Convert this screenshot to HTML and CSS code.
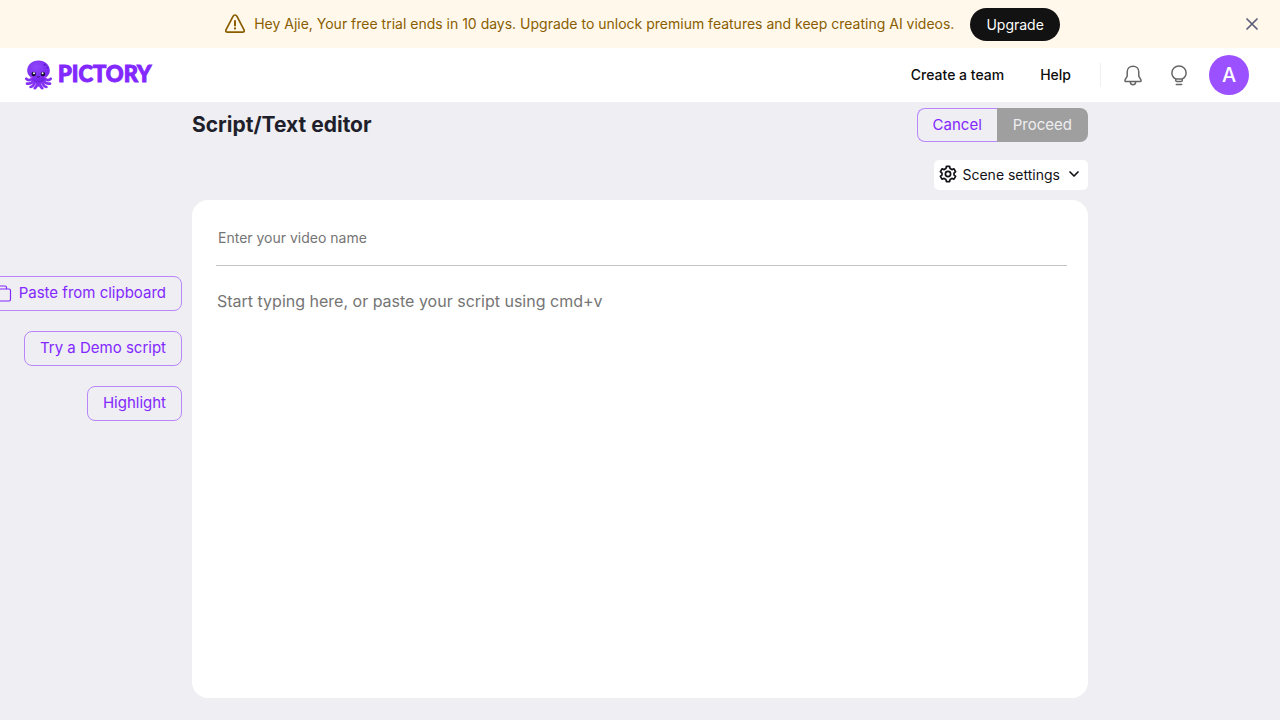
FILE: index.html
```html
<!DOCTYPE html>
<html lang="en">
<head>
<meta charset="utf-8">
<meta name="viewport" content="width=device-width, initial-scale=1">
<title>Pictory</title>
<link rel="stylesheet" href="styles.css">
</head>
<body>
<div class="banner">
  <div class="banner-content">
    <svg class="warning-icon" viewBox="0 0 24 24" width="24" height="24" fill="none" stroke="currentColor" stroke-width="1.7" stroke-linecap="round" stroke-linejoin="round" aria-hidden="true"><path d="M10 4.4 3.1 17.6C2.3 19.2 2.9 20.2 4.6 20.2H19.4C21.1 20.2 21.7 19.2 20.9 17.6L14 4.4C13 2.5 11 2.5 10 4.4Z"/><path d="M12 8.9v4.6" stroke-width="2"/><path d="M12 16.4v.2" stroke-width="2.2"/></svg>
    <span class="banner-text">Hey Ajie, Your free trial ends in 10 days. Upgrade to unlock premium features and keep creating AI videos.</span>
    <button class="upgrade" type="button">Upgrade</button>
  </div>
  <button class="close" type="button" aria-label="Close"><svg viewBox="0 0 12 12" width="12" height="12" stroke="currentColor" stroke-width="1.7" stroke-linecap="round" aria-hidden="true"><path d="M1 1 11 11M11 1 1 11"/></svg></button>
</div>

<header class="header">
  <a class="logo" href="#" aria-label="Pictory">
    <svg viewBox="0 0 30 30" width="30" height="30" aria-hidden="true">
      <defs><radialGradient id="skin" cx=".4" cy=".3" r=".8"><stop offset="0" stop-color="#8f48fb"/><stop offset=".7" stop-color="#7a2af0"/><stop offset="1" stop-color="#6520d2"/></radialGradient></defs>
      <g fill="none" stroke="#8331f3" stroke-width="2.7" stroke-linecap="round">
        <path d="M9 18C6.5 20.5 4 20.7 2.3 18.8"/><path d="M10 20C8 23.4 5.5 24 3 23.6"/><path d="M11.5 20C10.5 24.5 9 26.6 6.6 27"/><path d="M13 20.5C13.5 24.5 12.7 27 10.8 28.2"/>
        <path d="M20 18C22.5 20.5 25 20.7 26.7 18.8"/><path d="M19 20C21 23.4 23.5 24 26 23.6"/><path d="M17.5 20C18.5 24.5 20 26.6 22.4 27"/><path d="M16 20.5C15.5 24.5 16.3 27 18.2 28.2"/><path d="M14.5 21v4.5"/>
      </g>
      <path d="M14.5.5C7.8.5 3.2 5 3.2 10.8c0 3.1 1.9 5.5 4.4 6.9.8 3 3.2 4.8 6.9 4.8s6.1-1.8 6.9-4.8c2.5-1.4 4.4-3.8 4.4-6.9C25.8 5 21.2.5 14.5.5Z" fill="url(#skin)"/>
      <circle cx="20.6" cy="4.8" r="1" fill="#5616ba"/><circle cx="23" cy="7.8" r=".8" fill="#5616ba"/>
      <circle cx="9.7" cy="14" r="2.2" fill="#180b35"/><circle cx="18.9" cy="14" r="2.2" fill="#180b35"/>
      <circle cx="10" cy="13.3" r="1" fill="#fff"/><circle cx="18.6" cy="13.3" r="1" fill="#fff"/>
      <path d="M13.1 16.8q1.2 1.2 2.4 0" fill="none" stroke="#2b0d62" stroke-width=".8" stroke-linecap="round"/>
      <path d="M6.6 17.2h1.4M20.6 17.2h1.4" stroke="#c957f5" stroke-linecap="round"/>
    </svg>
    <span class="wordmark">PICTORY</span>
  </a>
  <nav class="nav">
    <a class="nav-link" href="#">Create a team</a>
    <a class="nav-link" href="#">Help</a>
    <span class="divider"></span>
    <button class="icon-button" type="button" aria-label="Notifications"><svg viewBox="0 0 20 22" width="20" height="22" fill="none" stroke="currentColor" stroke-width="1.5" stroke-linecap="round" stroke-linejoin="round" aria-hidden="true"><path d="M10 2.2C6.6 2.2 4.2 4.7 4.2 8V12.2L2.2 15.7C1.6 16.8 2 17.6 3.1 17.6H16.9C18 17.6 18.4 16.8 17.8 15.7L15.8 12.2V8C15.8 4.7 13.4 2.2 10 2.2Z"/><path d="M7.3 17.8C7.5 19.7 8.5 20.7 10 20.7S12.5 19.7 12.7 17.8"/></svg></button>
    <button class="icon-button" type="button" aria-label="Tips"><svg viewBox="0 0 20 22" width="20" height="22" fill="none" stroke="currentColor" stroke-width="1.5" stroke-linecap="round" stroke-linejoin="round" aria-hidden="true"><path d="M6.7 14.9C4.3 13.6 2.9 11.5 2.9 8.9 2.9 5 5.9 2 10 2S17.1 5 17.1 8.9C17.1 11.5 15.7 13.6 13.3 14.9V16.2C13.3 17.1 12.9 17.6 12 17.6H8C7.1 17.6 6.7 17.1 6.7 16.2ZM6.9 14.9H13.1M7.3 20.6H12.7"/></svg></button>
    <button class="avatar" type="button">A</button>
  </nav>
</header>

<main class="page">
  <aside class="tools">
    <button class="outline" type="button"><svg viewBox="0 0 18 18" width="18" height="18" fill="none" stroke="currentColor" stroke-width="1.2" stroke-linejoin="round" aria-hidden="true"><path d="M4.5 5H15Q16.5 5 16.5 6.5V15.5Q16.5 17 15 17H6Q4.5 17 4.5 15.5ZM12.5 5V3.5Q12.5 2 11 2H2.5Q1 2 1 3.5V12.5Q1 14 2.5 14H4.5"/></svg>Paste from clipboard</button>
    <button class="outline" type="button">Try a Demo script</button>
    <button class="outline" type="button">Highlight</button>
  </aside>
  <section class="editor">
    <div class="title-row">
      <h1 class="title">Script/Text editor</h1>
      <div class="actions">
        <button class="outline cancel" type="button">Cancel</button>
        <button class="proceed" type="button" disabled>Proceed</button>
      </div>
    </div>
    <button class="settings" type="button">
      <svg viewBox="0 0 18 18" width="18" height="18" fill="none" stroke="currentColor" stroke-width="1.7" stroke-linejoin="round" aria-hidden="true"><path d="M7.4 1.4H10.6L11.1 3.6 12.8 4.6 15 3.9 16.6 6.6 15 8.1V9.9L16.6 11.4 15 14.1 12.8 13.4 11.1 14.4 10.6 16.6H7.4L6.9 14.4 5.2 13.4 3 14.1 1.4 11.4 3 9.9V8.1L1.4 6.6 3 3.9 5.2 4.6 6.9 3.6Z"/><circle cx="9" cy="9" r="2.6"/></svg>
      <span>Scene settings</span>
      <svg class="chevron" viewBox="0 0 12 12" width="12" height="12" fill="none" stroke="currentColor" stroke-width="1.7" stroke-linecap="round" stroke-linejoin="round" aria-hidden="true"><path d="m2 4 4 4 4-4"/></svg>
    </button>
    <div class="card">
      <input class="name" type="text" placeholder="Enter your video name" aria-label="Video name">
      <textarea class="script" placeholder="Start typing here, or paste your script using cmd+v" aria-label="Script"></textarea>
    </div>
  </section>
</main>
</body>
</html>
```
FILE: styles.css
```css
* { box-sizing: border-box; }

body {
  margin: 0;
  min-height: 100vh;
  display: flex;
  flex-direction: column;
  overflow-x: hidden;
  background: #eeeef3;
  color: #1f1f2b;
  font-family: Inter, "Liberation Sans", sans-serif;
}

button, input, textarea { font: inherit; }
button { cursor: pointer; border: 0; padding: 0; }
a { text-decoration: none; }
svg { display: block; flex: none; }

.banner {
  display: flex;
  align-items: center;
  height: 48px;
  padding-right: 20px;
  background: #fff8eb;
  color: #8a5d00;
}

.banner-content {
  flex: 1;
  display: flex;
  align-items: center;
  justify-content: center;
  padding-left: 39px;
}

.warning-icon { margin-right: 7px; }
.banner-text { font-size: 14px; line-height: 22px; }

.upgrade {
  height: 33px;
  margin-left: 16px;
  padding: 0 16px;
  border-radius: 17px;
  background: #121212;
  color: #fff;
  font-size: 14px;
}

.close {
  display: flex;
  align-items: center;
  justify-content: center;
  width: 16px;
  height: 16px;
  background: none;
  color: #5c5c78;
}

.header {
  display: flex;
  align-items: center;
  justify-content: space-between;
  height: 54px;
  padding: 0 31px 0 24px;
  background: #fff;
}

.logo { display: flex; align-items: center; gap: 4px; color: #8328ff; }

.wordmark {
  padding-bottom: 2px;
  font-family: Lato, sans-serif;
  font-size: 22px;
  font-weight: 900;
  line-height: 28px;
  -webkit-text-stroke: 1px currentColor;
}

.nav { display: flex; align-items: center; }

.nav-link {
  margin-right: 36px;
  padding-bottom: 2px;
  color: #0d0d0d;
  font-size: 14px;
  font-weight: 500;
}

.divider {
  width: 1px;
  height: 24px;
  margin: 0 22px 0 -7px;
  background: #f0f0f3;
}

.icon-button { margin-right: 26px; background: none; color: #666; }

.avatar {
  width: 40px;
  height: 40px;
  margin-left: -6px;
  border-radius: 50%;
  background: #9b51ff;
  color: #fff;
  font-size: 20px;
  font-weight: 500;
}

.page {
  flex: 1;
  display: grid;
  grid-template-columns: 15% 70% 15%;
  padding: 6px 0 22px;
}

.tools {
  display: flex;
  flex-direction: column;
  align-items: flex-end;
  gap: 20px;
  padding: 168px 10px 0 0;
}

.outline {
  display: flex;
  align-items: center;
  gap: 7px;
  height: 35px;
  padding: 0 15px 2px;
  border: 1px solid #b987fa;
  border-radius: 8px;
  background: transparent;
  color: #8328ff;
  font-size: 15px;
  white-space: nowrap;
}

.editor { display: flex; flex-direction: column; }

.title-row {
  display: flex;
  align-items: center;
  justify-content: space-between;
}

.title { margin: 0; font-size: 21px; font-weight: 700; line-height: 34px; }

.actions { display: flex; height: 34px; }
.cancel { height: 34px; border-right: 0; border-radius: 8px 0 0 8px; }

.proceed {
  height: 34px;
  padding: 0 16px 2px;
  border-radius: 0 8px 8px 0;
  background: #9f9fa0;
  color: #eeeef0;
  font-size: 15px;
}

.settings {
  align-self: flex-end;
  display: flex;
  align-items: center;
  height: 30px;
  margin: 18px 0 10px;
  padding: 0 8px 2px 5px;
  gap: 5px;
  border-radius: 5px;
  background: #fff;
  color: #121217;
  font-size: 14px;
}

.chevron { margin-left: 3px; }

.card {
  flex: 1;
  display: flex;
  flex-direction: column;
  padding: 12px 21px 16px 24px;
  border-radius: 16px;
  background: #fff;
}

.name {
  height: 54px;
  padding: 0 2px 2px;
  border: 0;
  border-bottom: 1px solid #c4c4c8;
  border-radius: 0;
  background: transparent;
  font-size: 14px;
}

.script {
  flex: 1;
  margin-top: 23px;
  padding: 0 1px;
  border: 0;
  resize: none;
  background: transparent;
  font-size: 16px;
  line-height: 24px;
}

.name::placeholder, .script::placeholder { color: #757575; opacity: 1; }
```
